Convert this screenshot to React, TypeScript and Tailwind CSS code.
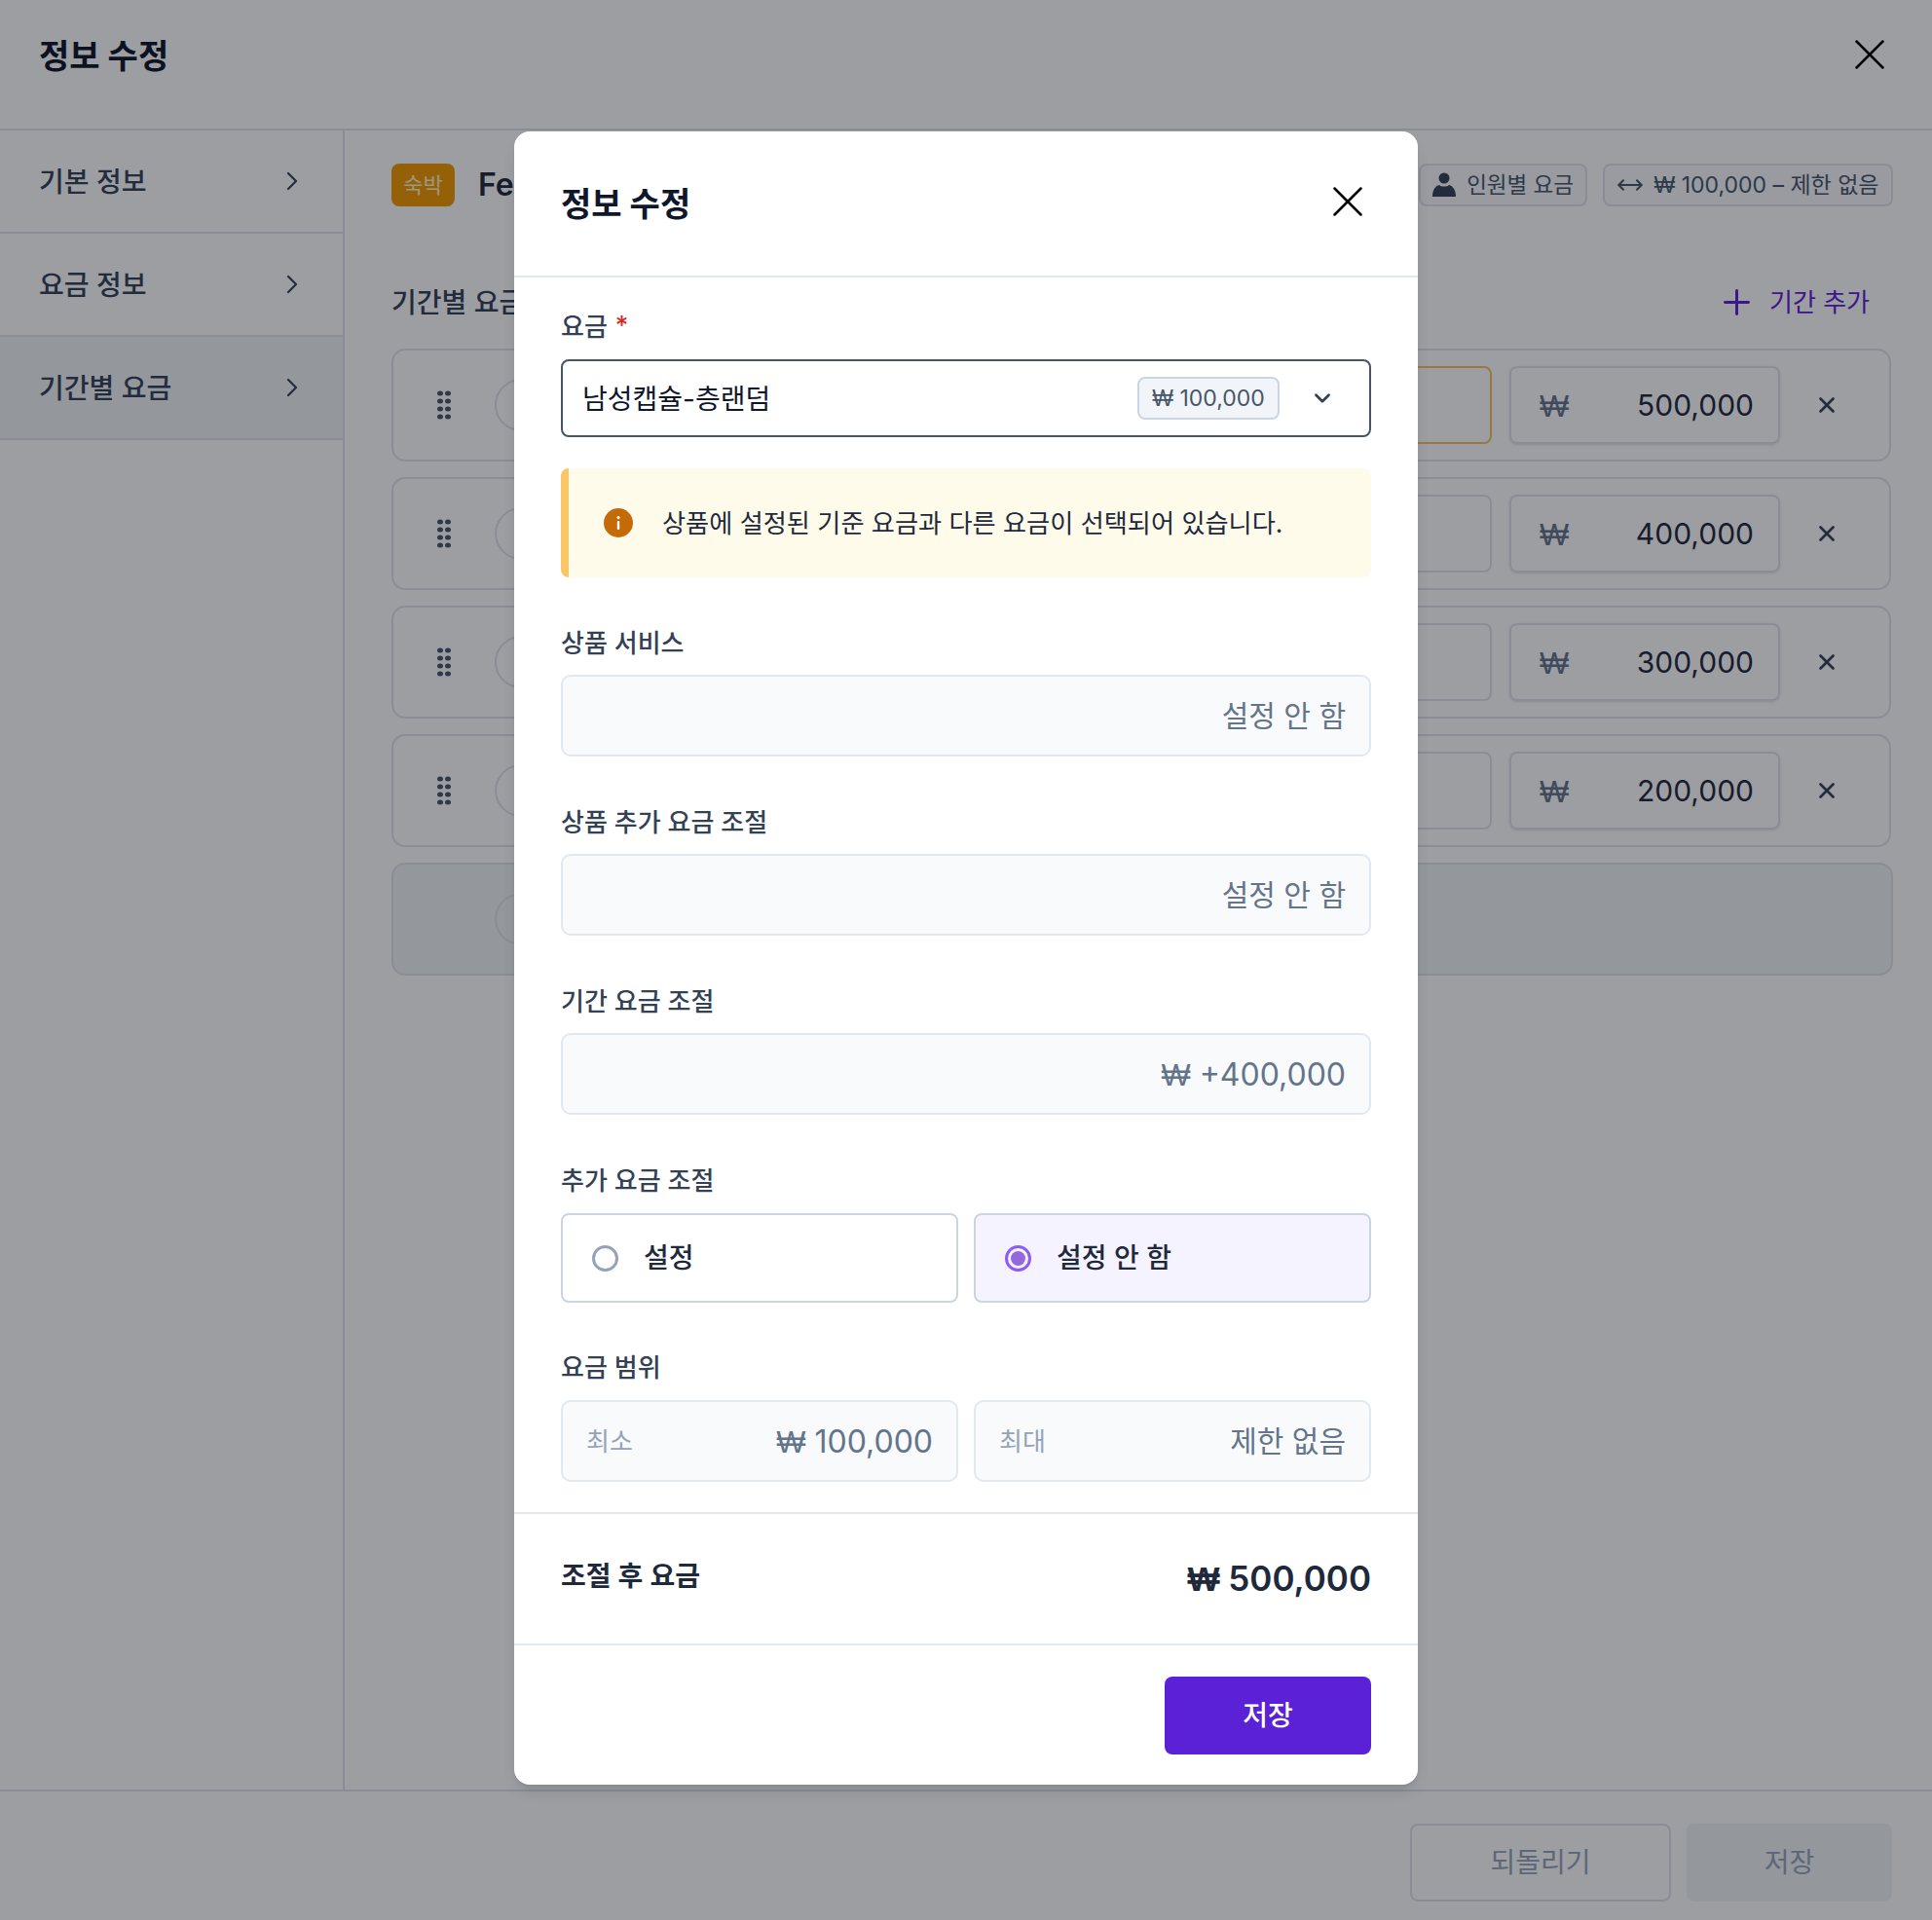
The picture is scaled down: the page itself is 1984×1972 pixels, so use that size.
import React from 'react';
import { ChevronRight, X, Plus, ChevronDown, MoveHorizontal } from 'lucide-react';

const rows = ['500,000', '400,000', '300,000', '200,000'];

const Won = () => <span className="[font-family:'Open_Sans',sans-serif]">₩</span>;

const DragIcon = () => (
  <svg width="14" height="30" viewBox="0 0 14 30" fill="#475569">
    {[3, 11, 19, 27].map((y) => (
      <g key={y}>
        <ellipse cx="3" cy={y} rx="3" ry="2.5" />
        <ellipse cx="11" cy={y} rx="3" ry="2.5" />
      </g>
    ))}
  </svg>
);

const PersonIcon = () => (
  <svg width="24" height="26" viewBox="0 0 24 26" fill="#334155">
    <circle cx="12" cy="6" r="5.5" />
    <path d="M0 25c0-7 3-11 7-12 2 2 8 2 10 0 4 1 7 5 7 12z" />
  </svg>
);

const InfoIcon = () => (
  <svg width="30" height="30" viewBox="0 0 30 30">
    <circle cx="15" cy="15" r="15" fill="#c46a08" />
    <rect x="13.8" y="13" width="2.4" height="9" rx="1" fill="#fff" />
    <circle cx="15" cy="9.6" r="1.6" fill="#fff" />
  </svg>
);

const Sidebar = () => (
  <div className="w-[354px] shrink-0 border-r-2 border-[#dfe3e9]">
    {['기본 정보', '요금 정보', '기간별 요금'].map((label, i) => (
      <div
        key={label}
        className={`h-[106px] flex items-center justify-between pl-10 pr-[36px] border-b-2 border-[#dfe3e9] text-[28px] font-medium text-[#334155] ${i === 2 ? 'bg-[#f1f3f5]' : ''}`}
      >
        <span className="pt-[2px]">{label}</span>
        <ChevronRight size={32} strokeWidth={1.6} color="#334155" />
      </div>
    ))}
  </div>
);

const Background = () => (
  <div className="h-full flex flex-col bg-white">
    <div className="h-[134px] shrink-0 flex items-center justify-between pl-10 pr-[37px] pb-[20px] border-b-2 border-[#dfe3e9]">
      <span className="pt-[2px] text-[34px] font-bold text-[#0f172a]">정보 수정</span>
      <X size={54} strokeWidth={1.1} color="#000" />
    </div>
    <div className="flex-1 flex min-h-0">
      <Sidebar />
      <div className="flex-1 pl-[48px] pr-[40px] pt-[34px]">
        <div className="h-[44px] flex items-center">
          <span className="w-[65px] h-[44px] rounded-[8px] bg-[#f09a00] flex items-center justify-center text-[22px] text-[#fef3c7]">숙박</span>
          <span className="ml-6 text-[32px] font-semibold text-[#1e293b]">Fe</span>
          <div className="ml-auto flex items-center gap-4">
            <div className="h-[44px] px-3 flex items-center gap-[11px] rounded-[8px] border-2 border-[#dfe3e9] bg-[#f8fafc] text-[22.5px] text-[#475569]">
              <PersonIcon />
              <span>인원별 요금</span>
            </div>
            <div className="w-[298px] h-[44px] flex items-center justify-center gap-[10px] rounded-[8px] border-2 border-[#dfe3e9] bg-[#f8fafc] text-[23px] text-[#475569]">
              <MoveHorizontal size={28} strokeWidth={1.75} color="#475569" />
              <span><Won /> 100,000 – 제한 없음</span>
            </div>
          </div>
        </div>
        <div className="mt-[76px] h-[44px] flex items-center justify-between pr-[24px]">
          <span className="pt-[2px] text-[28px] font-medium text-[#334155]">기간별 요금</span>
          <span className="flex items-center gap-[13px] text-[26px] text-[#5b21d6]">
            <Plus size={41} strokeWidth={1.75} />
            기간 추가
          </span>
        </div>
        <div className="mt-[26px] mr-[2px] flex flex-col gap-[16px]">
          {rows.map((price, i) => (
            <div key={price} className="h-[116px] rounded-[14px] border-2 border-[#dfe3e9] flex items-center pl-[45px] pr-[17px]">
              <DragIcon />
              <div className="ml-[45px] w-[100px] h-[54px] rounded-full border-2 border-[#dfe3e9]" />
              <div className={`ml-auto w-[300px] h-[80px] rounded-[8px] border-2 ${i === 0 ? 'border-[#f7c267]' : 'border-[#dfe3e9]'}`} />
              <div className="ml-[18px] w-[278px] h-[80px] rounded-[8px] border-2 border-[#dfe3e9] flex items-center justify-between pl-[29px] pr-[25px] text-[30px] text-[#1e293b] shadow-sm">
                <span className="text-[32px] text-[#64748b]"><Won /></span>
                <span>{price}</span>
              </div>
              <div className="w-[95px] flex justify-center">
                <X size={26} strokeWidth={2.5} color="#334155" />
              </div>
            </div>
          ))}
          <div className="h-[116px] -mr-[2px] rounded-[14px] border-2 border-[#dfe3e9] bg-[#f1f3f5] flex items-center pl-[104px]">
            <div className="w-[100px] h-[54px] rounded-full border-2 border-[#dfe3e9]" />
          </div>
        </div>
      </div>
    </div>
    <div className="h-[134px] shrink-0 border-t-2 border-[#dfe3e9] flex items-start justify-end gap-4 pr-[41px] pt-[33px]">
      <button className="w-[268px] h-[80px] rounded-[8px] border-2 border-[#dfe3e9] text-[28px] text-[#94a3b8]">되돌리기</button>
      <button className="w-[211px] h-[80px] rounded-[8px] bg-[#f1f3f5] text-[28px] text-[#94a3b8]">저장</button>
    </div>
  </div>
);

const Field = ({ label, value }: { label: string; value: React.ReactNode }) => (
  <div className="mt-[50px]">
    <div className="h-[34px] flex items-center text-[26px] font-medium text-[#334155]">{label}</div>
    <div className="mt-[16px] h-[84px] rounded-[10px] border-2 border-[#e2e8f0] bg-[#f8fafc] flex items-center justify-end px-[24px] text-[30px] text-[#64748b]">
      {value}
    </div>
  </div>
);

const Modal = () => (
  <div className="w-[928px] h-[1698px] rounded-[16px] bg-white flex flex-col shadow-lg">
    <div className="h-[150px] shrink-0 flex items-center justify-between pl-12 pr-[45px] border-b-2 border-[#e2e8f0]">
      <span className="text-[34px] font-bold text-[#0f172a]">정보 수정</span>
      <X size={54} strokeWidth={1.1} color="#000" className="mb-[4px]" />
    </div>
    <div className="flex-1 px-12 pt-[33px]">
      <div className="h-[34px] flex items-center gap-2 text-[26px] font-medium text-[#334155]">
        <span>요금</span>
        <span className="text-[#dc2626] -mt-1">*</span>
      </div>
      <div className="mt-[17px] h-[80px] rounded-[8px] border-2 border-[#475569] flex items-center pl-[20px] pr-[35px] text-[28px] text-[#0f172a]">
        <span className="pt-[2px]">남성캡슐-층랜덤</span>
        <span className="ml-auto w-[146px] h-[44px] rounded-[8px] border-2 border-[#cbd5e1] bg-[#f1f5f9] flex items-center justify-center text-[23px] text-[#475569]">
          <span><Won /> 100,000</span>
        </span>
        <ChevronDown size={26} strokeWidth={2.5} color="#334155" className="ml-[31px]" />
      </div>
      <div className="mt-[32px] h-[112px] rounded-[8px] border-l-[8px] border-[#fcc565] bg-[#fffbeb] flex items-center pl-[36px] gap-[30px] text-[26.2px] text-[#1e293b]">
        <InfoIcon />
        <span className="pt-[2px]">상품에 설정된 기준 요금과 다른 요금이 선택되어 있습니다.</span>
      </div>
      <Field label="상품 서비스" value="설정 안 함" />
      <Field label="상품 추가 요금 조절" value="설정 안 함" />
      <Field label="기간 요금 조절" value={<span className="text-[32px]"><Won /> +400,000</span>} />
      <div className="mt-[50px]">
        <div className="h-[34px] flex items-center text-[26px] font-medium text-[#334155]">추가 요금 조절</div>
        <div className="mt-[17px] grid grid-cols-2 gap-4">
          <div className="h-[92px] rounded-[8px] border-2 border-[#cbd5e1] flex items-center pl-[30px] gap-[26px] text-[28px] font-medium text-[#1e293b]">
            <span className="w-[27px] h-[27px] rounded-full border-[3px] border-[#94a3b8]" />
            설정
          </div>
          <div className="h-[92px] rounded-[8px] border-2 border-[#cbd5e1] bg-[#f5f3ff] flex items-center pl-[30px] gap-[26px] text-[28px] font-medium text-[#1e293b]">
            <span className="w-[27px] h-[27px] rounded-full border-[3px] border-[#8b5cf6] flex items-center justify-center">
              <span className="w-[15px] h-[15px] rounded-full bg-[#9568e0]" />
            </span>
            설정 안 함
          </div>
        </div>
      </div>
      <div className="mt-[49px]">
        <div className="h-[34px] flex items-center text-[26px] font-medium text-[#334155]">요금 범위</div>
        <div className="mt-[17px] grid grid-cols-2 gap-4">
          <div className="h-[84px] rounded-[10px] border-2 border-[#e2e8f0] bg-[#f8fafc] flex items-center justify-between px-[24px]">
            <span className="text-[26px] text-[#94a3b8]">최소</span>
            <span className="text-[32px] text-[#64748b]"><Won /> 100,000</span>
          </div>
          <div className="h-[84px] rounded-[10px] border-2 border-[#e2e8f0] bg-[#f8fafc] flex items-center justify-between px-[24px]">
            <span className="text-[26px] text-[#94a3b8]">최대</span>
            <span className="text-[30px] text-[#64748b]">제한 없음</span>
          </div>
        </div>
      </div>
    </div>
    <div className="h-[135px] shrink-0 border-t-2 border-[#e2e8f0] flex items-center justify-between px-12">
      <span className="mb-[6px] text-[28px] font-semibold text-[#1e293b]">조절 후 요금</span>
      <span className="text-[35px] font-semibold text-[#1e293b]"><Won /> 500,000</span>
    </div>
    <div className="h-[145px] shrink-0 border-t-2 border-[#e2e8f0] flex items-center justify-end px-12">
      <button className="w-[212px] h-[80px] rounded-[8px] bg-[#5b21d6] text-[28px] font-medium text-white">저장</button>
    </div>
  </div>
);

export default function App() {
  return (
    <div className="relative h-[1972px] overflow-hidden [font-family:Inter,'Noto_Sans_CJK_KR',sans-serif]">
      <Background />
      {/* dimmed backdrop + modal */}
      <div className="absolute inset-0 bg-[rgba(10,12,22,0.4)] flex justify-center pt-[135px]">
        <Modal />
      </div>
    </div>
  );
}
